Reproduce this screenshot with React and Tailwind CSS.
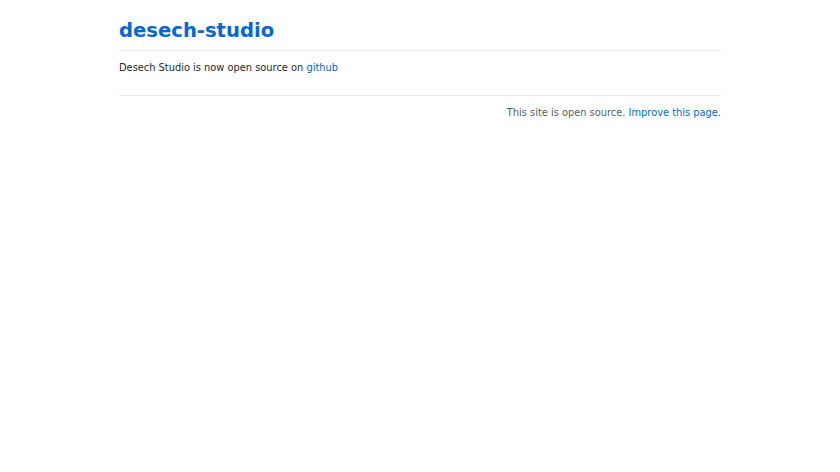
export default function App() {
  return (
    <div className="min-h-screen bg-white text-[#24292e]" style={{ fontFamily: '"DejaVu Sans", sans-serif' }}>
      <div className="mx-auto w-[602px] pt-[18px]">
        <h1 className="border-b border-[#eaecef] pb-[6px] text-[19.6px] font-bold leading-[26px] text-[#0366d6]">
          desech-studio
        </h1>
        <p className="mt-[9px] text-[9.85px] leading-[15px]">
          Desech Studio is now open source on <a href="#" className="text-[#0366d6]">github</a>
        </p>
        <div className="mt-[20px] border-t border-[#eaecef] pt-[9px] text-right text-[9.85px] leading-[15px] text-[#586069]">
          This site is open source. <a href="#" className="text-[#0366d6]">Improve this page</a>.
        </div>
      </div>
    </div>
  )
}
